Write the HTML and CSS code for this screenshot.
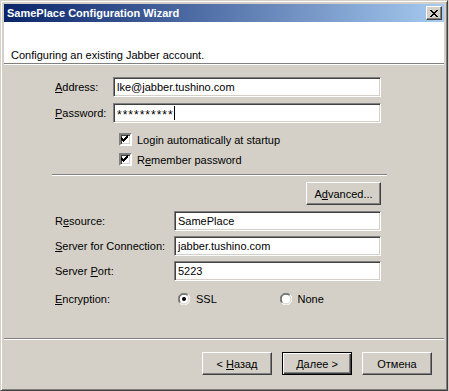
FILE: index.html
```html
<!DOCTYPE html>
<html lang="en">
<head>
    <meta charset="UTF-8">
    <title>SamePlace Configuration Wizard</title>
    <link rel="stylesheet" href="styles.css">
</head>
<body>
    <div class="window">
        <!-- Title bar -->
        <div class="titlebar">
            <span class="title">SamePlace Configuration Wizard</span>
            <span class="close">
                <svg width="8" height="7" viewBox="0 0 8 7" shape-rendering="crispEdges">
                    <path d="M0 0h2v1h-2zM6 0h2v1h-2zM1 1h2v1h-2zM5 1h2v1h-2zM2 2h4v1h-4zM3 3h2v1h-2zM2 4h4v1h-4zM1 5h2v1h-2zM5 5h2v1h-2zM0 6h2v1h-2zM6 6h2v1h-2z" fill="#000"/>
                </svg>
            </span>
        </div>

        <!-- Header -->
        <div class="header">Configuring an existing Jabber account.</div>

        <!-- Main form -->
        <div class="content">
            <div class="account">
                <label><span><u>A</u>ddress:</span></label>
                <div class="field">lke@jabber.tushino.com</div>
                <label><span><u>P</u>assword:</span></label>
                <div class="field"><span class="mask">**********</span><span class="caret"></span></div>
            </div>

            <div class="checks">
                <div class="check">
                    <span class="box">
                        <svg width="9" height="9" viewBox="0 0 9 9" shape-rendering="crispEdges">
                            <path d="M1 3h1v3h-1zM2 4h1v3h-1zM3 5h1v3h-1zM4 4h1v3h-1zM5 3h1v3h-1zM6 2h1v3h-1zM7 1h1v3h-1z" fill="#000"/>
                        </svg>
                    </span>
                    <span>Lo<u>g</u>in automatically at startup</span>
                </div>
                <div class="check">
                    <span class="box">
                        <svg width="9" height="9" viewBox="0 0 9 9" shape-rendering="crispEdges">
                            <path d="M1 3h1v3h-1zM2 4h1v3h-1zM3 5h1v3h-1zM4 4h1v3h-1zM5 3h1v3h-1zM6 2h1v3h-1zM7 1h1v3h-1z" fill="#000"/>
                        </svg>
                    </span>
                    <span>R<u>e</u>member password</span>
                </div>
            </div>

            <div class="sep"></div>

            <div class="adv-row">
                <button class="btn">A<u>d</u>vanced...</button>
            </div>

            <div class="server">
                <label><span>R<u>e</u>source:</span></label>
                <div class="field">SamePlace</div>
                <label><span><u>S</u>erver for Connection:</span></label>
                <div class="field">jabber.tushino.com</div>
                <label><span>Server <u>P</u>ort:</span></label>
                <div class="field">5223</div>
                <label class="enc"><span><u>E</u>ncryption:</span></label>
                <div class="radios">
                    <div class="radio">
                        <svg width="12" height="12" viewBox="0 0 12 12">
                            <circle cx="6" cy="6" r="5.5" fill="#fff"/>
                            <path d="M1.8 10.2A5.5 5.5 0 0 1 10.2 1.8" fill="none" stroke="#808080"/>
                            <path d="M10.2 1.8A5.5 5.5 0 0 1 1.8 10.2" fill="none" stroke="#fff"/>
                            <path d="M2.5 9.5A4.5 4.5 0 0 1 9.5 2.5" fill="none" stroke="#404040"/>
                            <path d="M9.5 2.5A4.5 4.5 0 0 1 2.5 9.5" fill="none" stroke="#d4d0c8"/>
                            <circle cx="6" cy="6" r="2" fill="#000"/>
                        </svg>
                        <span>SSL</span>
                    </div>
                    <div class="radio">
                        <svg width="12" height="12" viewBox="0 0 12 12">
                            <circle cx="6" cy="6" r="5.5" fill="#fff"/>
                            <path d="M1.8 10.2A5.5 5.5 0 0 1 10.2 1.8" fill="none" stroke="#808080"/>
                            <path d="M10.2 1.8A5.5 5.5 0 0 1 1.8 10.2" fill="none" stroke="#fff"/>
                            <path d="M2.5 9.5A4.5 4.5 0 0 1 9.5 2.5" fill="none" stroke="#404040"/>
                            <path d="M9.5 2.5A4.5 4.5 0 0 1 2.5 9.5" fill="none" stroke="#d4d0c8"/>
                        </svg>
                        <span>None</span>
                    </div>
                </div>
            </div>
        </div>

        <!-- Wizard buttons -->
        <div class="footer">
            <button class="btn nav">&lt; <u>Н</u>азад</button>
            <button class="btn nav default"><u>Д</u>алее &gt;</button>
            <button class="btn nav">Отмена</button>
        </div>
    </div>
</body>
</html>
```

FILE: styles.css
```css
body { margin: 0; background-color: #d4d0c8; font-family: "Liberation Sans", Arial, sans-serif; font-size: 11px; color: #000; }

/* Window frame */
.window {
    width: 440px;
    height: 383px;
    padding: 3px;
    background-color: #d4d0c8;
    border: 1px solid;
    border-color: #d4d0c8 #404040 #404040 #d4d0c8;
    box-shadow: inset 1px 1px #fff, inset -1px -1px #808080;
    display: flex;
    flex-direction: column;
}

.titlebar {
    height: 18px;
    background: linear-gradient(to right, #0a246a, #a6caf0);
    display: flex;
    align-items: center;
    justify-content: space-between;
    padding: 0 2px 0 3px;
}

.title { color: #fff; font-weight: bold; font-size: 11px; }

.close {
    width: 14px;
    height: 12px;
    background-color: #d4d0c8;
    border: 1px solid;
    border-color: #fff #404040 #404040 #fff;
    box-shadow: inset -1px -1px #808080;
    display: flex;
    align-items: center;
    justify-content: center;
}

.header {
    height: 42px;
    background-color: #fff;
    padding-left: 7px;
    line-height: 13px;
    box-sizing: border-box;
    padding-top: 27px;
    border-bottom: 1px solid #808080;
    box-shadow: 0 1px #fff;
}

.content {
    flex: 1;
    padding: 13px 0 0 51px;
    box-sizing: border-box;
    border-bottom: 1px solid #808080;
}

label { display: flex; align-items: center; }
u { text-decoration: underline; text-underline-offset: 1px; }

.field {
    height: 20px;
    box-sizing: border-box;
    background-color: #fff;
    border: 1px solid;
    border-color: #808080 #fff #fff #808080;
    box-shadow: inset 1px 1px #404040, inset -1px -1px #d4d0c8;
    padding: 0 3px;
    display: flex;
    align-items: center;
    white-space: nowrap;
}

.mask { font-size: 12px; letter-spacing: 1px; padding-top: 3px; }
.caret { display: inline-block; width: 1px; height: 14px; background-color: #000; }

.account {
    display: grid;
    grid-template-columns: 58px 268px;
    grid-auto-rows: 20px;
    row-gap: 6px;
}

.checks {
    margin-top: 10px;
    padding-left: 64px;
    display: flex;
    flex-direction: column;
    gap: 7px;
}

.check { display: flex; align-items: center; height: 13px; gap: 5px; }

.box {
    width: 9px;
    height: 9px;
    background-color: #fff;
    border: 2px solid;
    border-color: #808080 #fff #fff #808080;
    box-shadow: inset 1px 1px #404040, inset -1px -1px #d4d0c8;
    display: flex;
}

.box svg { margin: -1px 0 0 -1px; }

.sep {
    margin: 8px 0 0 -3px;
    width: 335px;
    height: 0;
    border-top: 1px solid #808080;
    border-bottom: 1px solid #fff;
}

.adv-row { width: 326px; display: flex; justify-content: flex-end; margin-top: 6px; }

.btn {
    width: 75px;
    height: 23px;
    padding: 0;
    background-color: #d4d0c8;
    border: 1px solid;
    border-color: #fff #404040 #404040 #fff;
    box-shadow: inset -1px -1px #808080;
    font-family: "Liberation Sans", Arial, sans-serif;
    font-size: 11px;
    color: #000;
}

.server {
    margin-top: 6px;
    display: grid;
    grid-template-columns: 119px 207px;
    grid-template-rows: 20px 20px 20px 20px;
    row-gap: 5px;
}

.server .enc, .radios { margin-top: 5px; }

.radios { display: flex; align-items: center; padding-left: 4px; }
.radio { display: flex; align-items: center; gap: 6px; width: 105px; }

.footer {
    border-top: 1px solid #fff;
    height: 48px;
    box-sizing: border-box;
    display: flex;
    justify-content: flex-end;
    gap: 10px;
    padding: 12px 12px 0 0;
}

.nav { width: 70px; }
.default { border: 1px solid #000; box-shadow: inset 1px 1px #fff, inset -1px -1px #404040, inset -2px -2px #808080; }
```
